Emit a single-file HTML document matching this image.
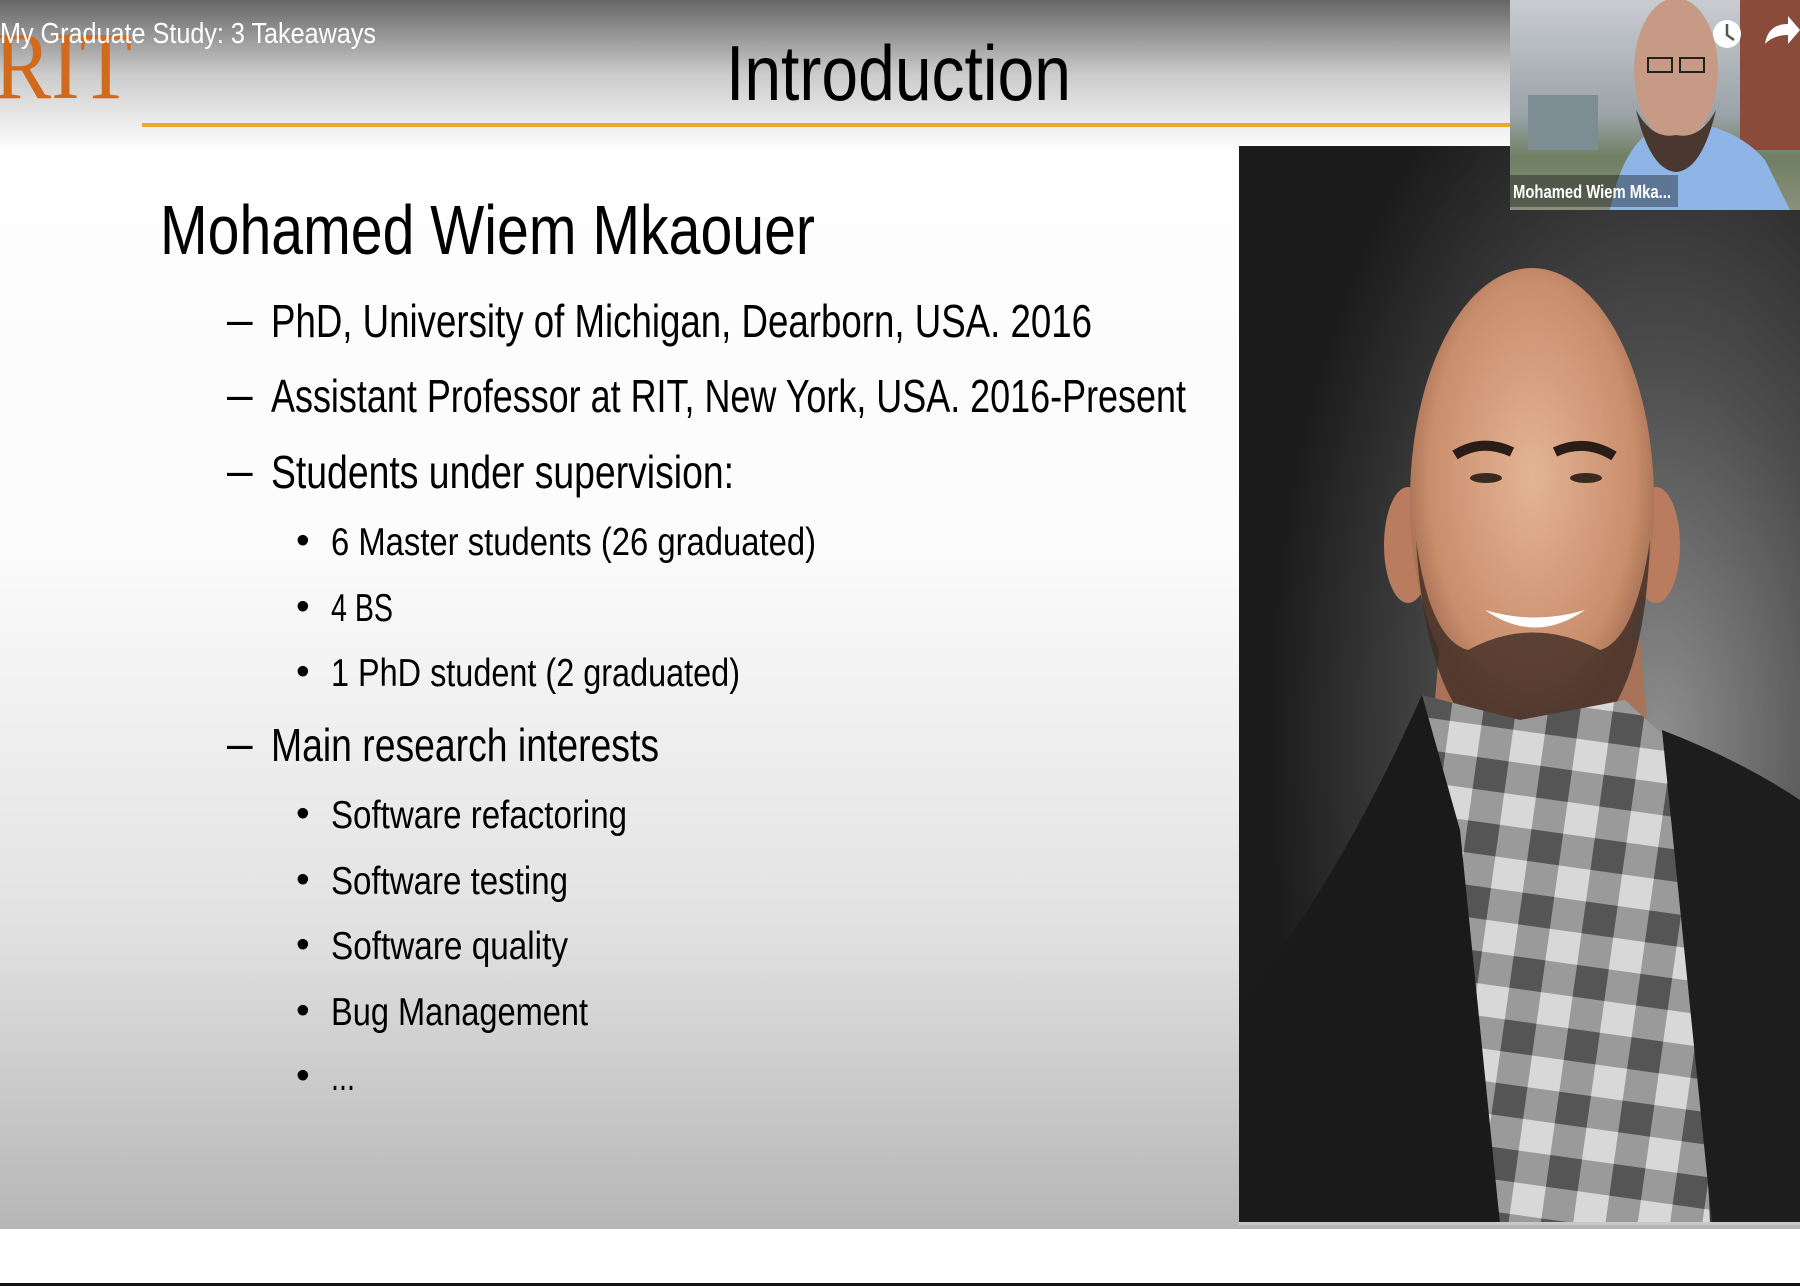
<!DOCTYPE html>
<html><head><meta charset="utf-8">
<style>
html,body{margin:0;padding:0;width:1800px;height:1286px;overflow:hidden;background:#fff}
svg{display:block}
</style></head>
<body>
<svg width="1800" height="1286" viewBox="0 0 1800 1286" xmlns="http://www.w3.org/2000/svg">
<defs>
<linearGradient id="slide" x1="0" y1="0" x2="0" y2="1">
<stop offset="0" stop-color="#ffffff"/>
<stop offset="0.45" stop-color="#fbfbfb"/>
<stop offset="0.75" stop-color="#e2e2e2"/>
<stop offset="1" stop-color="#b6b6b6"/>
</linearGradient>
<linearGradient id="topshade" x1="0" y1="0" x2="0" y2="1">
<stop offset="0" stop-color="#000" stop-opacity="0.6"/>
<stop offset="0.5" stop-color="#000" stop-opacity="0.2"/>
<stop offset="1" stop-color="#000" stop-opacity="0"/>
</linearGradient>
<radialGradient id="bg" cx="0.75" cy="0.55" r="0.7">
<stop offset="0" stop-color="#8e8e8e"/>
<stop offset="0.5" stop-color="#4c4c4c"/>
<stop offset="1" stop-color="#1c1b1c"/>
</radialGradient>
<radialGradient id="skin" cx="0.5" cy="0.45" r="0.6">
<stop offset="0" stop-color="#e4b496"/>
<stop offset="0.7" stop-color="#c98e6c"/>
<stop offset="1" stop-color="#8e5c44"/>
</radialGradient>
<pattern id="check" width="64" height="64" patternUnits="userSpaceOnUse" patternTransform="rotate(8)">
<rect width="64" height="64" fill="#9a9a9a"/>
<rect width="32" height="32" fill="#d8d8d8"/>
<rect x="32" y="32" width="32" height="32" fill="#555"/>
</pattern>
<linearGradient id="thumb" x1="0" y1="0" x2="0" y2="1">
<stop offset="0" stop-color="#c9ccd0"/>
<stop offset="0.55" stop-color="#9aa3a8"/>
<stop offset="0.75" stop-color="#6f7f62"/>
<stop offset="1" stop-color="#8a8f7e"/>
</linearGradient>
</defs>

<rect x="0" y="0" width="1800" height="1229" fill="url(#slide)"/>
<rect x="0" y="0" width="1800" height="150" fill="url(#topshade)"/>

<text x="-6" y="98" font-family="Liberation Serif, serif" font-size="96" fill="#d26a1e" textLength="138" lengthAdjust="spacingAndGlyphs">RIT</text>

<text x="0" y="43" font-family="Liberation Sans Narrow, Liberation Sans, sans-serif" font-size="29" fill="#fff" textLength="376" lengthAdjust="spacingAndGlyphs">My Graduate Study: 3 Takeaways</text>

<text x="726" y="100" font-family="Liberation Sans Narrow, Liberation Sans, sans-serif" font-size="78" fill="#000" textLength="345" lengthAdjust="spacingAndGlyphs">Introduction</text>

<rect x="142" y="123" width="1370" height="4" fill="#eaaa2a"/>

<g font-family="Liberation Sans Narrow, Liberation Sans, sans-serif" fill="#000">
<text x="160" y="254" font-size="70" textLength="655" lengthAdjust="spacingAndGlyphs">Mohamed Wiem Mkaouer</text>
<g font-size="46">
<text x="227" y="335">–</text>
<text x="271" y="337" textLength="821" lengthAdjust="spacingAndGlyphs">PhD, University of Michigan, Dearborn, USA. 2016</text>
<text x="227" y="410">–</text>
<text x="271" y="412" textLength="915" lengthAdjust="spacingAndGlyphs">Assistant Professor at RIT, New York, USA. 2016-Present</text>
<text x="227" y="486">–</text>
<text x="271" y="488" textLength="463" lengthAdjust="spacingAndGlyphs">Students under supervision:</text>
<text x="227" y="759">–</text>
<text x="271" y="761" textLength="388" lengthAdjust="spacingAndGlyphs">Main research interests</text>
</g>
<g font-size="39">
<text x="296" y="553">•</text><text x="331" y="555" textLength="485" lengthAdjust="spacingAndGlyphs">6 Master students (26 graduated)</text>
<text x="296" y="619">•</text><text x="331" y="621" textLength="62" lengthAdjust="spacingAndGlyphs">4 BS</text>
<text x="296" y="684">•</text><text x="331" y="686" textLength="409" lengthAdjust="spacingAndGlyphs">1 PhD student (2 graduated)</text>
<text x="296" y="826">•</text><text x="331" y="828" textLength="296" lengthAdjust="spacingAndGlyphs">Software refactoring</text>
<text x="296" y="892">•</text><text x="331" y="894" textLength="237" lengthAdjust="spacingAndGlyphs">Software testing</text>
<text x="296" y="957">•</text><text x="331" y="959" textLength="237" lengthAdjust="spacingAndGlyphs">Software quality</text>
<text x="296" y="1023">•</text><text x="331" y="1025" textLength="257" lengthAdjust="spacingAndGlyphs">Bug Management</text>
<text x="296" y="1088">•</text><text x="331" y="1090" textLength="24" lengthAdjust="spacingAndGlyphs">...</text>
</g>
</g>

<!-- Photo -->
<g>
<rect x="1239" y="146" width="561" height="1078" fill="url(#bg)"/>
<!-- neck -->
<path d="M1440 640 L1640 640 L1650 760 L1430 760 Z" fill="#a87358"/>
<!-- ears -->
<ellipse cx="1408" cy="545" rx="24" ry="58" fill="#b97c5e"/>
<ellipse cx="1656" cy="545" rx="24" ry="58" fill="#b97c5e"/>
<!-- head -->
<ellipse cx="1532" cy="500" rx="122" ry="232" fill="url(#skin)"/>
<!-- beard -->
<path d="M1416 540 Q1425 690 1480 735 Q1532 765 1590 735 Q1645 690 1650 540 Q1635 640 1600 650 Q1532 615 1468 650 Q1430 640 1416 540 Z" fill="#3e2c24" opacity="0.8"/>
<path d="M1485 610 Q1535 645 1585 610 Q1535 625 1485 610 Z" fill="#fff"/>
<!-- eyebrows & eyes -->
<path d="M1455 455 Q1482 438 1512 452" stroke="#2a1c16" stroke-width="10" fill="none"/>
<path d="M1555 452 Q1585 438 1614 456" stroke="#2a1c16" stroke-width="10" fill="none"/>
<ellipse cx="1486" cy="478" rx="16" ry="5" fill="#3a2a22"/>
<ellipse cx="1586" cy="478" rx="16" ry="5" fill="#3a2a22"/>
<!-- shirt -->
<path d="M1422 695 L1520 720 L1625 700 L1690 760 L1710 1224 L1480 1224 Z" fill="url(#check)"/>
<!-- jacket -->
<path d="M1239 1000 Q1330 900 1422 695 L1460 830 L1500 1224 L1239 1224 Z" fill="#1b1a1b"/>
<path d="M1662 730 Q1740 760 1800 800 L1800 1224 L1712 1224 Z" fill="#1e1d1e"/>
<rect x="1239" y="1222" width="561" height="3" fill="#c8c8c8"/>
</g>

<rect x="0" y="1229" width="1800" height="54" fill="#fff"/>
<rect x="0" y="1283" width="1800" height="3" fill="#111"/>

<!-- video thumbnail -->
<g>
<rect x="1510" y="0" width="290" height="210" fill="url(#thumb)"/>
<rect x="1528" y="95" width="70" height="55" fill="#7d8d93"/>
<rect x="1740" y="0" width="60" height="150" fill="#8a4b3a"/>
<path d="M1610 210 Q1625 130 1676 120 Q1735 125 1765 160 L1790 210 Z" fill="#8fb5e6"/>
<ellipse cx="1676" cy="70" rx="42" ry="72" fill="#c69a85"/>
<path d="M1636 110 Q1650 170 1676 172 Q1702 170 1716 110 Q1700 140 1676 135 Q1652 140 1636 110Z" fill="#4a3830"/>
<rect x="1648" y="58" width="24" height="14" fill="none" stroke="#222" stroke-width="2"/>
<rect x="1680" y="58" width="24" height="14" fill="none" stroke="#222" stroke-width="2"/>
<rect x="1510" y="175" width="168" height="32" fill="#000" opacity="0.35"/>
<text x="1513" y="198" font-family="Liberation Sans Narrow, Liberation Sans, sans-serif" font-size="18" font-weight="bold" fill="#fff" textLength="158" lengthAdjust="spacingAndGlyphs">Mohamed Wiem Mka...</text>
<circle cx="1727" cy="34" r="14" fill="#fff"/>
<path d="M1727 24 L1727 35 L1734 40" stroke="#555" stroke-width="2.5" fill="none"/>
<path d="M1765 44 Q1768 24 1788 24 L1788 16 L1800 30 L1788 44 L1788 35 Q1773 35 1765 44 Z" fill="#fff"/>
</g>
</svg>
</body></html>
